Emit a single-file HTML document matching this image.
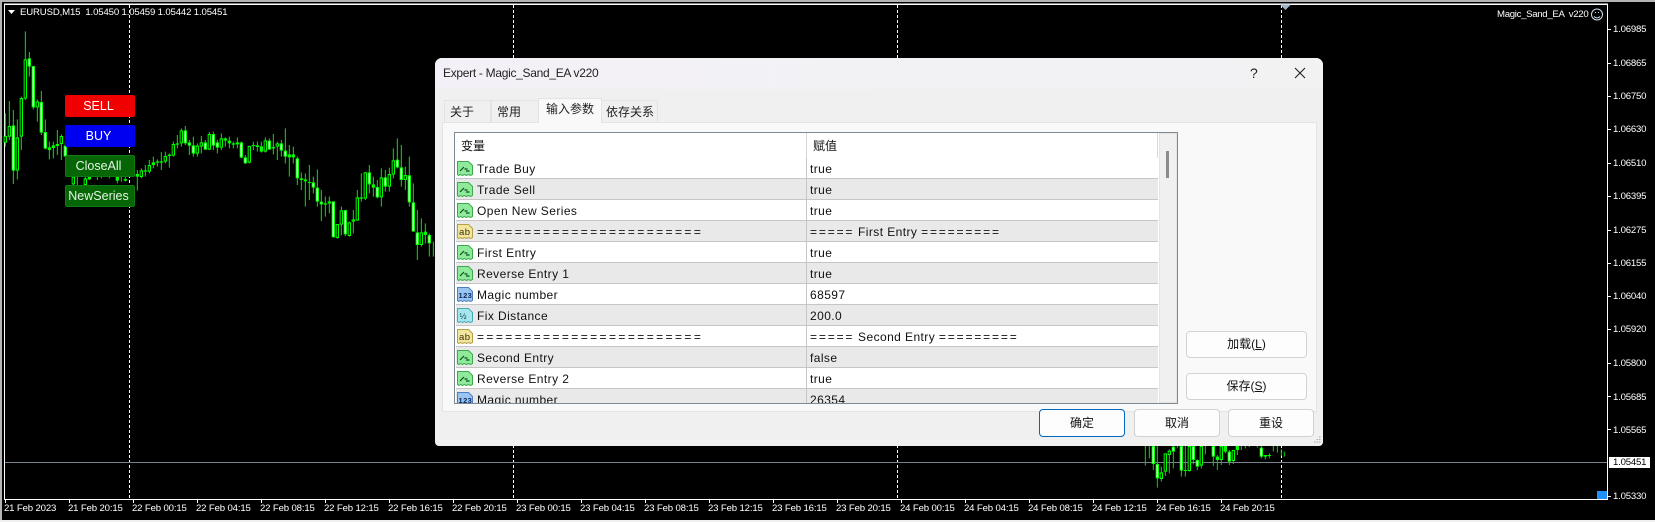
<!DOCTYPE html>
<html>
<head>
<meta charset="utf-8">
<style>
html,body{margin:0;padding:0;width:1655px;height:522px;overflow:hidden;background:#000}
body{position:relative;font-family:"Liberation Sans","Noto Sans CJK SC",sans-serif}
.abs,.t,.p,.d,.cb,.tab,.btn{position:absolute}
.t{color:#fff;font-size:9.6px;line-height:12px;white-space:pre;letter-spacing:-.15px}
.p{left:1613px;color:#fff;font-size:9.6px;line-height:12px;letter-spacing:-.2px}
.d{top:503px;color:#fff;font-size:9.6px;line-height:12px;white-space:pre;letter-spacing:-.15px}
.cb{left:65px;width:70px;height:22px;border-radius:2px;color:#fff;font-size:12.5px;line-height:22px;text-align:center;box-sizing:border-box;padding-right:3px}
#dlg{left:435px;top:58px;width:888px;height:388px;background:#f0f0f0;border-radius:7px 7px 4px 4px;overflow:hidden;color:#111}
#bar{left:0;top:0;width:888px;height:31px;background:linear-gradient(90deg,#f3f1f7,#f2f2f3)}
.tab{box-sizing:border-box;background:#f0f0f0;border:1px solid #e3e3e3;border-bottom:0;font-size:12px;text-align:left;padding-left:5px;line-height:22px;height:22px;top:42px;color:#222}
#panel{left:7px;top:64px;width:875px;height:290px;background:#f9f9f9;border:1px solid #e4e4e4;box-sizing:border-box}
#tbl{left:454px;top:132px;width:724px;height:272px;background:#fff;border:1px solid #7f8992;box-sizing:border-box;overflow:hidden;font-size:12px;color:#111}
.r{position:absolute;left:1px;width:702px;height:21px;box-sizing:border-box;border-bottom:1px solid #c6c6c6;background:#fff;letter-spacing:.42px;white-space:pre}
.g{background:#e9e9e9}
.r svg{position:absolute;left:1px;top:2px}
.r b{font-weight:normal;position:absolute;left:21px;top:4px;line-height:15px}
.r i{font-style:normal;position:absolute;left:354px;top:4px;line-height:15px}
.r u{text-decoration:none;position:absolute;left:350px;top:0;width:1px;height:21px;background:#c6c6c6}
.eq{letter-spacing:2.42px!important}
.e{letter-spacing:1.85px;word-spacing:3px}
.btn{box-sizing:border-box;background:#fdfdfd;border:1px solid #d2d2d2;border-radius:4px;font-size:12px;text-align:center;color:#111}
</style>
</head>
<body>
<div class="abs" style="left:0;top:0;width:1655px;height:2px;background:#b4b4b4"></div>
<div class="abs" style="left:0;top:0;width:2px;height:522px;background:#b4b4b4"></div>
<div class="abs" style="left:0;top:520px;width:1655px;height:2px;background:#f0f0f0"></div>

<svg class="abs" style="left:0;top:0" width="1655" height="522" viewBox="0 0 1655 522">
<path d="M4.5 4V499.5H1607.5V4ZM4.5 4.5H1607.5" fill="none" stroke="#fff"/>
<path d="M129.5 5V499M513.5 5V499M897.5 5V499M1281.5 5V499" stroke="#fff" stroke-dasharray="3 2"/>
<path d="M5 462.5H1607" stroke="#77838f"/>
<g transform="scale(.33333)" fill="none">
<path stroke="#00e400" stroke-width="3" d="M16 340V440M28 303V420M40 330V552M52 358V538M64 290V450M76 94V300M88 156V230M100 198V328M112 298V365M124 273V405M136 358V448M148 425V478M160 425V475M172 390V465M184 403V480M196 425V470M220 500V555M232 500V555M256 500V570M268 500V540M292 500V540M304 500V535M328 500V535M352 500V550M364 500V545M376 500V545M412 510V572M424 505V535M436 495V530M448 480V520M460 470V505M472 478V500M484 456V510M496 455V490M508 460V503M520 425V470M532 405V445M544 385V440M556 378V435M568 420V465M580 410V470M592 430V470M604 408V460M616 420V450M628 396V450M640 395V450M652 420V460M664 400V450M676 412V440M688 410V445M700 425V445M712 412V445M724 425V475M736 465V492M748 437V490M760 425V450M772 425V455M784 425V458M796 412V458M808 415V450M820 402V463M832 425V480M844 420V470M856 385V490M868 435V530M880 440V490M892 470V555M904 517V570M916 520V620M928 495V600M940 530V580M952 508V620M964 570V663M976 590V650M988 590V640M1000 604V712M1012 672V716M1024 620V706M1036 630V708M1048 665V710M1060 630V700M1072 570V662M1084 520V605M1096 516V600M1108 495V580M1120 530V590M1132 540V595M1144 505V620M1156 510V575M1168 503V575M1180 445V535M1192 415V505M1204 435V560M1216 500V570M1228 470V620M1240 550V695M1252 630V780M1264 655V740M1276 670V730M1288 700V770M1300 725V770"/>
<path stroke="#00ff00" stroke-width="10" d="M16 408V428M28 378V410M40 376V512M52 412V512M64 294V410M76 178V296M88 175V200M100 198V322M112 304V322M124 306V398M136 396V446M148 442V450M160 436V444M172 432V438M184 408V432M196 436V470M220 530V553M256 535V555M268 530V538M352 530V542M376 537V542M412 522V530M424 511V531M436 511V515M448 495V515M460 487V495M472 484V488M484 484V488M496 468V485M508 464V468M520 432V467M532 430V434M544 391V430M556 391V430M568 427V437M580 436V461M592 437V461M604 427V440M616 427V449M628 402V449M640 402V437M652 427V443M664 415V443M676 415V422M688 422V430M700 430V434M712 427V433M724 427V473M736 472V490M748 438V488M760 435V438M772 436V441M784 439V455M796 421V455M808 422V449M820 441V445M832 430V440M844 430V452M856 452V470M868 463V472M880 463V472M892 475V535M904 535V540M916 538V544M928 546V549M940 547V563M952 563V605M964 605V613M976 610V614M988 604V611M1000 604V712M1012 672V714M1024 631V674M1036 630V703M1048 667V708M1060 658V665M1072 592V662M1084 592V596M1096 517V596M1108 517V553M1120 553V563M1132 561V592M1144 532V592M1156 532V560M1168 522V560M1180 481V524M1192 479V502M1204 502V540M1216 525V540M1228 526V607M1240 607V695M1252 697V735M1264 697V735M1276 695V705M1288 705V730"/>
<path stroke="#000" stroke-width="4" d="M16 411V425M28 381V407M52 415V509M64 297V407M76 181V293M112 307V319M184 411V429M220 533V550M256 538V552M424 514V528M448 498V512M496 471V482M520 435V464M544 394V427M592 440V458M604 430V437M628 405V446M664 418V440M748 441V485M796 424V452M832 433V437M988 607V608M1012 675V711M1024 634V671M1048 670V705M1060 661V662M1072 595V659M1096 520V593M1144 535V589M1168 525V557M1180 484V521M1216 528V537M1264 700V732"/>
<path stroke="#f2fff2" stroke-width="4" d="M40 379V509M88 178V197M100 201V319M124 309V395M136 399V443M196 439V467M556 394V427M568 430V434M580 439V458M616 430V446M640 405V434M652 430V440M724 430V470M736 475V487M808 425V446M844 433V449M856 455V467M892 478V532M940 550V560M952 566V602M964 608V610M1000 607V709M1036 633V700M1108 520V550M1132 564V589M1156 535V557M1192 482V499M1204 505V537M1228 529V604M1240 610V692M1252 700V732M1288 708V727"/>
</g>
<g transform="translate(1040 300) scale(.33333)" fill="none">
<path stroke="#00d800" stroke-width="3" d="M316 438V497M328 438V475M340 438V510M352 438V563M364 500V545M376 460V528M388 448V520M400 438V505M412 438V445M424 438V530M436 438V530M448 438V515M460 438V493M472 478V510M484 438V505M496 438V463M520 438V498M532 465V510M544 438V495M556 438V460M568 450V495M580 450V492M592 438V465M604 438V450M616 438V445M628 438V441M652 438V443M664 438V475M676 465V478M688 460V475M700 438V455M712 438V458M724 448V468M733 455V470"/>
<path stroke="#00ff00" stroke-width="10" d="M340 438V492M352 492V535M364 517V537M376 460V515M388 452V465M400 440V455M424 438V512M436 510V513M448 438V513M460 438V480M472 480V500M484 438V497M520 438V470M532 470V480M544 438V480M556 438V455M568 455V485M580 450V483M592 438V450M664 443V470M676 465V470M688 465V468"/>
<path stroke="#000" stroke-width="4" d="M364 520V534M376 463V512M388 455V462M448 441V510M484 441V494M544 441V477M580 453V480"/>
<path stroke="#f2fff2" stroke-width="4" d="M340 441V489M352 495V532M400 443V452M424 441V509M460 441V477M472 483V497M520 441V467M568 458V482M664 446V467"/>
</g>
<path d="M1280 4.500H1291L1285.500 10Z" fill="#9fb4c8"/>
<path d="M8 10H15L11.500 14Z" fill="#fff"/>
<path d="M1607 29.500h4M1607 63.500h4M1607 96.500h4M1607 129.500h4M1607 163.500h4M1607 196.500h4M1607 230.500h4M1607 263.500h4M1607 296.500h4M1607 329.500h4M1607 363.500h4M1607 396.500h4M1607 429.500h4M1607 496.500h4" stroke="#fff"/>
<path d="M5.500 499v4M69.500 499v4M133.500 499v4M197.500 499v4M261.500 499v4M325.500 499v4M389.500 499v4M453.500 499v4M517.500 499v4M581.500 499v4M645.500 499v4M709.500 499v4M773.500 499v4M837.500 499v4M901.500 499v4M965.500 499v4M1029.500 499v4M1093.500 499v4M1157.500 499v4M1221.500 499v4" stroke="#fff"/>
<rect x="1597" y="491" width="10" height="8" fill="#1e90ff"/>
<rect x="1609" y="457" width="41" height="11" fill="#fff"/>
<circle cx="1597" cy="14.500" r="5.500" fill="none" stroke="#cfe0ee"/>
<path d="M1594 16.500q3 3 6 0" fill="none" stroke="#cfe0ee"/>
<path d="M1595 12.500h1M1598 12.500h1" stroke="#cfe0ee"/>
</svg>

<div class="t" style="left:20px;top:7px">EURUSD,M15  1.05450 1.05459 1.05442 1.05451</div>
<div class="t" style="left:1497px;top:9px;letter-spacing:-.3px">Magic_Sand_EA  v220</div>

<div class="p" style="top:24px">1.06985</div>
<div class="p" style="top:58px">1.06865</div>
<div class="p" style="top:91px">1.06750</div>
<div class="p" style="top:124px">1.06630</div>
<div class="p" style="top:158px">1.06510</div>
<div class="p" style="top:191px">1.06395</div>
<div class="p" style="top:225px">1.06275</div>
<div class="p" style="top:258px">1.06155</div>
<div class="p" style="top:291px">1.06040</div>
<div class="p" style="top:324px">1.05920</div>
<div class="p" style="top:358px">1.05800</div>
<div class="p" style="top:392px">1.05685</div>
<div class="p" style="top:425px">1.05565</div>
<div class="p" style="top:457px;color:#000">1.05451</div>
<div class="p" style="top:491px">1.05330</div>

<div class="d" style="left:4px">21 Feb 2023</div>
<div class="d" style="left:68px">21 Feb 20:15</div>
<div class="d" style="left:132px">22 Feb 00:15</div>
<div class="d" style="left:196px">22 Feb 04:15</div>
<div class="d" style="left:260px">22 Feb 08:15</div>
<div class="d" style="left:324px">22 Feb 12:15</div>
<div class="d" style="left:388px">22 Feb 16:15</div>
<div class="d" style="left:452px">22 Feb 20:15</div>
<div class="d" style="left:516px">23 Feb 00:15</div>
<div class="d" style="left:580px">23 Feb 04:15</div>
<div class="d" style="left:644px">23 Feb 08:15</div>
<div class="d" style="left:708px">23 Feb 12:15</div>
<div class="d" style="left:772px">23 Feb 16:15</div>
<div class="d" style="left:836px">23 Feb 20:15</div>
<div class="d" style="left:900px">24 Feb 00:15</div>
<div class="d" style="left:964px">24 Feb 04:15</div>
<div class="d" style="left:1028px">24 Feb 08:15</div>
<div class="d" style="left:1092px">24 Feb 12:15</div>
<div class="d" style="left:1156px">24 Feb 16:15</div>
<div class="d" style="left:1220px">24 Feb 20:15</div>

<div class="cb" style="top:95px;background:#f00000">SELL</div>
<div class="cb" style="top:125px;background:#0000f0">BUY</div>
<div class="cb" style="top:155px;background:#066606;border:1px solid #0f7a0f;line-height:20px;color:#e4f4e4">CloseAll</div>
<div class="cb" style="top:185px;background:#066606;border:1px solid #0f7a0f;line-height:20px;color:#e4f4e4">NewSeries</div>

<div class="abs" id="dlg">
  <div class="abs" id="bar"></div>
  <div class="abs" style="left:8px;top:7px;font-size:12px;line-height:16px;letter-spacing:-.3px;white-space:pre;color:#222">Expert - Magic_Sand_EA v220</div>
  <div class="abs" style="left:815px;top:7px;font-size:14px;line-height:16px;color:#222">?</div>
  <svg class="abs" style="left:859px;top:9px" width="12" height="12" viewBox="0 0 12 12"><path d="M1 1L11 11M11 1L1 11" stroke="#222" stroke-width="1.100" fill="none"/></svg>
  <div class="abs" id="panel"></div>
  <div class="tab" style="left:9px;width:47px">关于</div>
  <div class="tab" style="left:56px;width:48px">常用</div>
  <div class="tab" style="left:166px;width:57px;padding-left:4px">依存关系</div>
  <div class="tab" style="left:103px;width:64px;top:40px;height:25px;background:#f9f9f9;line-height:21px;padding-left:7px">输入参数</div>
  <div class="btn" style="left:751px;top:273px;width:121px;height:27px;line-height:25px">加载(<span style="text-decoration:underline">L</span>)</div>
  <div class="btn" style="left:751px;top:315px;width:121px;height:27px;line-height:25px">保存(<span style="text-decoration:underline">S</span>)</div>
  <div class="btn" style="left:604px;top:351px;width:86px;height:28px;line-height:26px;border-color:#0067c0">确定</div>
  <div class="btn" style="left:699px;top:351px;width:86px;height:28px;line-height:26px">取消</div>
  <div class="btn" style="left:793px;top:351px;width:86px;height:28px;line-height:26px">重设</div>
  <svg class="abs" style="left:878px;top:378px" width="9" height="9" viewBox="0 0 9 9"><path d="M6 1h1.500M3.500 3.500h1.500M6 3.500h1.500M1 6h1.500M3.500 6h1.500M6 6h1.500" stroke="#a8a8a8"/></svg>
</div>

<div class="abs" id="tbl">
  <div class="abs" style="left:6px;top:5px;font-size:12px;line-height:16px">变量</div>
  <div class="abs" style="left:358px;top:5px;font-size:12px;line-height:16px">赋值</div>
  <div class="abs" style="left:351px;top:0;width:1px;height:25px;background:#d8d8d8"></div>
  <div class="abs" style="left:702px;top:0;width:1px;height:25px;background:#d8d8d8"></div>
  <div class="abs" style="left:704px;top:0;width:18px;height:270px;background:#f0f0f0;border:1px solid #e4e4e4;box-sizing:border-box"></div>
  <div class="abs" style="left:711px;top:18px;width:3px;height:27px;background:#8c8c8c"></div>

  <div class="r" style="top:25px"><svg width="16" height="16" viewBox="0 0 16 16"><path d="M.5 1.500H11.500L15.500 5.500V14.500L13.500 15.500 11.500 14.500 9.500 15.500 7.500 14.500 5.500 15.500 3.500 14.500 1.500 15.500 .5 14.500Z" fill="#90ea9c" stroke="#3fa84f"/><path d="M3 11L7 7M7.500 9H10.500M9 11H12.500" stroke="#05501a" stroke-width="1.200" fill="none"/></svg><b>Trade Buy</b><u></u><i>true</i></div>
  <div class="r g" style="top:46px"><svg width="16" height="16" viewBox="0 0 16 16"><path d="M.5 1.500H11.500L15.500 5.500V14.500L13.500 15.500 11.500 14.500 9.500 15.500 7.500 14.500 5.500 15.500 3.500 14.500 1.500 15.500 .5 14.500Z" fill="#90ea9c" stroke="#3fa84f"/><path d="M3 11L7 7M7.500 9H10.500M9 11H12.500" stroke="#05501a" stroke-width="1.200" fill="none"/></svg><b>Trade Sell</b><u></u><i>true</i></div>
  <div class="r" style="top:67px"><svg width="16" height="16" viewBox="0 0 16 16"><path d="M.5 1.500H11.500L15.500 5.500V14.500L13.500 15.500 11.500 14.500 9.500 15.500 7.500 14.500 5.500 15.500 3.500 14.500 1.500 15.500 .5 14.500Z" fill="#90ea9c" stroke="#3fa84f"/><path d="M3 11L7 7M7.500 9H10.500M9 11H12.500" stroke="#05501a" stroke-width="1.200" fill="none"/></svg><b>Open New Series</b><u></u><i>true</i></div>
  <div class="r g" style="top:88px"><svg width="16" height="16" viewBox="0 0 16 16"><path d="M.5 1.500H11.500L15.500 5.500V14.500L13.500 15.500 11.500 14.500 9.500 15.500 7.500 14.500 5.500 15.500 3.500 14.500 1.500 15.500 .5 14.500Z" fill="#f2e6a0" stroke="#b5a040"/><text x="2" y="12" font-size="9.500" font-family="Liberation Sans" fill="#3a3000">ab</text></svg><b class="eq">========================</b><u></u><i><span class="e">=====</span> First Entry <span class="e">=========</span></i></div>
  <div class="r" style="top:109px"><svg width="16" height="16" viewBox="0 0 16 16"><path d="M.5 1.500H11.500L15.500 5.500V14.500L13.500 15.500 11.500 14.500 9.500 15.500 7.500 14.500 5.500 15.500 3.500 14.500 1.500 15.500 .5 14.500Z" fill="#90ea9c" stroke="#3fa84f"/><path d="M3 11L7 7M7.500 9H10.500M9 11H12.500" stroke="#05501a" stroke-width="1.200" fill="none"/></svg><b>First Entry</b><u></u><i>true</i></div>
  <div class="r g" style="top:130px"><svg width="16" height="16" viewBox="0 0 16 16"><path d="M.5 1.500H11.500L15.500 5.500V14.500L13.500 15.500 11.500 14.500 9.500 15.500 7.500 14.500 5.500 15.500 3.500 14.500 1.500 15.500 .5 14.500Z" fill="#90ea9c" stroke="#3fa84f"/><path d="M3 11L7 7M7.500 9H10.500M9 11H12.500" stroke="#05501a" stroke-width="1.200" fill="none"/></svg><b>Reverse Entry 1</b><u></u><i>true</i></div>
  <div class="r" style="top:151px"><svg width="16" height="16" viewBox="0 0 16 16"><path d="M.5 1.500H11.500L15.500 5.500V14.500L13.500 15.500 11.500 14.500 9.500 15.500 7.500 14.500 5.500 15.500 3.500 14.500 1.500 15.500 .5 14.500Z" fill="#9cc4f0" stroke="#4a7fc0"/><text x="1.500" y="12" font-size="7.500" font-weight="bold" font-family="Liberation Sans" fill="#0a2a60">123</text></svg><b>Magic number</b><u></u><i>68597</i></div>
  <div class="r g" style="top:172px"><svg width="16" height="16" viewBox="0 0 16 16"><path d="M.5 1.500H11.500L15.500 5.500V14.500L13.500 15.500 11.500 14.500 9.500 15.500 7.500 14.500 5.500 15.500 3.500 14.500 1.500 15.500 .5 14.500Z" fill="#a4e8ee" stroke="#48a8b8"/><text x="2.500" y="12" font-size="8.500" font-family="Liberation Sans" fill="#0a3a50">½</text></svg><b>Fix Distance</b><u></u><i>200.0</i></div>
  <div class="r" style="top:193px"><svg width="16" height="16" viewBox="0 0 16 16"><path d="M.5 1.500H11.500L15.500 5.500V14.500L13.500 15.500 11.500 14.500 9.500 15.500 7.500 14.500 5.500 15.500 3.500 14.500 1.500 15.500 .5 14.500Z" fill="#f2e6a0" stroke="#b5a040"/><text x="2" y="12" font-size="9.500" font-family="Liberation Sans" fill="#3a3000">ab</text></svg><b class="eq">========================</b><u></u><i><span class="e">=====</span> Second Entry <span class="e">=========</span></i></div>
  <div class="r g" style="top:214px"><svg width="16" height="16" viewBox="0 0 16 16"><path d="M.5 1.500H11.500L15.500 5.500V14.500L13.500 15.500 11.500 14.500 9.500 15.500 7.500 14.500 5.500 15.500 3.500 14.500 1.500 15.500 .5 14.500Z" fill="#90ea9c" stroke="#3fa84f"/><path d="M3 11L7 7M7.500 9H10.500M9 11H12.500" stroke="#05501a" stroke-width="1.200" fill="none"/></svg><b>Second Entry</b><u></u><i>false</i></div>
  <div class="r" style="top:235px"><svg width="16" height="16" viewBox="0 0 16 16"><path d="M.5 1.500H11.500L15.500 5.500V14.500L13.500 15.500 11.500 14.500 9.500 15.500 7.500 14.500 5.500 15.500 3.500 14.500 1.500 15.500 .5 14.500Z" fill="#90ea9c" stroke="#3fa84f"/><path d="M3 11L7 7M7.500 9H10.500M9 11H12.500" stroke="#05501a" stroke-width="1.200" fill="none"/></svg><b>Reverse Entry 2</b><u></u><i>true</i></div>
  <div class="r g" style="top:256px"><svg width="16" height="16" viewBox="0 0 16 16"><path d="M.5 1.500H11.500L15.500 5.500V14.500L13.500 15.500 11.500 14.500 9.500 15.500 7.500 14.500 5.500 15.500 3.500 14.500 1.500 15.500 .5 14.500Z" fill="#9cc4f0" stroke="#4a7fc0"/><text x="1.500" y="12" font-size="7.500" font-weight="bold" font-family="Liberation Sans" fill="#0a2a60">123</text></svg><b>Magic number</b><u></u><i>26354</i></div>
</div>
</body>
</html>
